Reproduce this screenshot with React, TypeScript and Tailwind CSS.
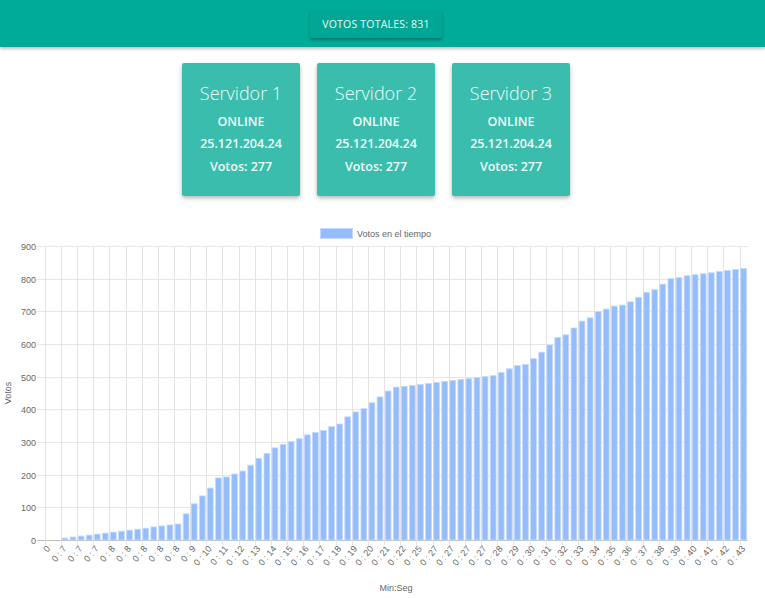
const votes = [
  0, 0, 6, 9, 12, 15, 18, 21, 24, 27, 30, 33, 36, 40, 43, 46, 49, 80, 111, 135, 159, 190, 193, 202, 211,
  229, 250, 265, 282, 293, 301, 310, 322, 329, 335, 347, 355, 377, 392, 402, 420, 438, 456, 468, 470,
  473, 476, 479, 482, 485, 488, 491, 494, 497, 500, 503, 513, 524, 534, 537, 555, 575, 597, 620, 628,
  649, 670, 680, 699, 707, 716, 719, 729, 743, 758, 766, 783, 800, 803, 809, 812, 815, 818, 822, 825,
  828, 831,
];

const shownLabels = [
  '0', '0 : 7', '0 : 7', '0 : 7', '0 : 8', '0 : 8', '0 : 8', '0 : 8', '0 : 8', '0 : 9', '0 : 10',
  '0 : 11', '0 : 12', '0 : 13', '0 : 14', '0 : 15', '0 : 16', '0 : 17', '0 : 18', '0 : 19', '0 : 20',
  '0 : 21', '0 : 22', '0 : 25', '0 : 27', '0 : 27', '0 : 27', '0 : 27', '0 : 28', '0 : 29', '0 : 30',
  '0 : 31', '0 : 32', '0 : 33', '0 : 34', '0 : 35', '0 : 36', '0 : 37', '0 : 38', '0 : 39', '0 : 40',
  '0 : 41', '0 : 42', '0 : 43',
];

const servers = [1, 2, 3];

// chart geometry, in svg coords (svg top = page y 220)
const X0 = 44.7;
const STEP = 8.08;
const Y_ZERO = 321;
const Y_TOP = 27;
const yOf = (v: number) => Y_ZERO - (v * (Y_ZERO - Y_TOP)) / 900;

function VotesChart() {
  const right = X0 + STEP * votes.length;
  const font = '"Liberation Sans", Arial, sans-serif';
  return (
    <svg width={765} height={378} className="block">
      {/* legend */}
      <rect x={320.5} y={9.5} width={32} height={10} fill="#96bdfb" stroke="#c2d8fd" />
      <text x={357} y={17.5} fontSize={9} fill="#666" fontFamily={font}>
        Votos en el tiempo
      </text>

      {/* horizontal grid + y labels */}
      {Array.from({ length: 10 }, (_, i) => {
        const y = Math.round(yOf(i * 100)) + 0.5;
        return (
          <g key={i}>
            <line x1={37} x2={right} y1={y} y2={y} stroke={i === 0 ? '#bdbdbd' : '#e6e6e6'} />
            <text x={36} y={y + 3} fontSize={9} fill="#666" textAnchor="end" fontFamily={font}>
              {i * 100}
            </text>
          </g>
        );
      })}

      {/* vertical grid */}
      {shownLabels.map((_, k) => {
        const x = Math.round(X0 + 2 * k * STEP) + 0.5;
        return <line key={k} x1={x} x2={x} y1={Y_TOP} y2={Y_ZERO + 5} stroke="#e3e3e3" />;
      })}

      {/* bars */}
      {votes.map((v, i) => {
        if (v === 0) return null;
        const cx = X0 + STEP * (i + 0.5);
        const top = yOf(v);
        return (
          <rect
            key={i}
            x={cx - 2.9}
            y={top}
            width={5.8}
            height={Y_ZERO - top}
            fill="#96bdfb"
            stroke="#c4d9fd"
            strokeWidth={0.8}
          />
        );
      })}

      {/* x labels */}
      {shownLabels.map((l, k) => {
        const cx = X0 + STEP * (2 * k + 0.5);
        return (
          <text
            key={k}
            x={cx + 2}
            y={Y_ZERO + 9}
            fontSize={9}
            fill="#666"
            textAnchor="end"
            fontFamily={font}
            transform={`rotate(-50 ${cx + 2} ${Y_ZERO + 9})`}
          >
            {l}
          </text>
        );
      })}

      {/* axis titles */}
      <text
        x={11}
        y={174}
        fontSize={9}
        fill="#666"
        textAnchor="middle"
        fontFamily={font}
        transform="rotate(-90 11 174)"
      >
        Votos
      </text>
      <text x={396} y={372} fontSize={9} fill="#666" textAnchor="middle" fontFamily={font}>
        Min:Seg
      </text>
    </svg>
  );
}

export default function App() {
  return (
    <div className="h-[598px] w-[765px] overflow-hidden bg-white font-['Open_Sans','Noto_Sans',sans-serif]">
      <header className="relative z-10 flex h-[47px] w-full justify-center bg-[#00ab9a] pr-[13px] shadow-[0_2px_3px_rgba(0,0,0,0.25)]">
        <div className="mt-[11px] flex h-[27px] w-[132px] items-center justify-center rounded-[2px] bg-[#02a694] text-[10.5px] tracking-[0.2px] text-[#eafaf8] shadow-[0_2px_3px_rgba(0,0,0,0.3)]">
          VOTOS TOTALES: 831
        </div>
      </header>

      <div className="mt-[16px] flex justify-center gap-[17px] pr-[13px]">
        {servers.map((n) => (
          <div
            key={n}
            className="flex h-[133px] w-[118px] flex-col items-center rounded-[2px] bg-[#3bbdae] text-[#f0fbf9] shadow-[0_2px_4px_rgba(0,0,0,0.3)]"
          >
            <div className="mt-[16px] text-[18px] font-light leading-[28px]">Servidor {n}</div>
            <div className="mt-[7px] text-[12.5px] font-semibold leading-[16px]">ONLINE</div>
            <div className="mt-[6px] text-[12.5px] font-semibold leading-[16px]">25.121.204.24</div>
            <div className="mt-[7px] text-[12.5px] font-semibold leading-[16px]">Votos: 277</div>
          </div>
        ))}
      </div>

      <div className="mt-[23px]">
        <VotesChart />
      </div>
    </div>
  );
}
